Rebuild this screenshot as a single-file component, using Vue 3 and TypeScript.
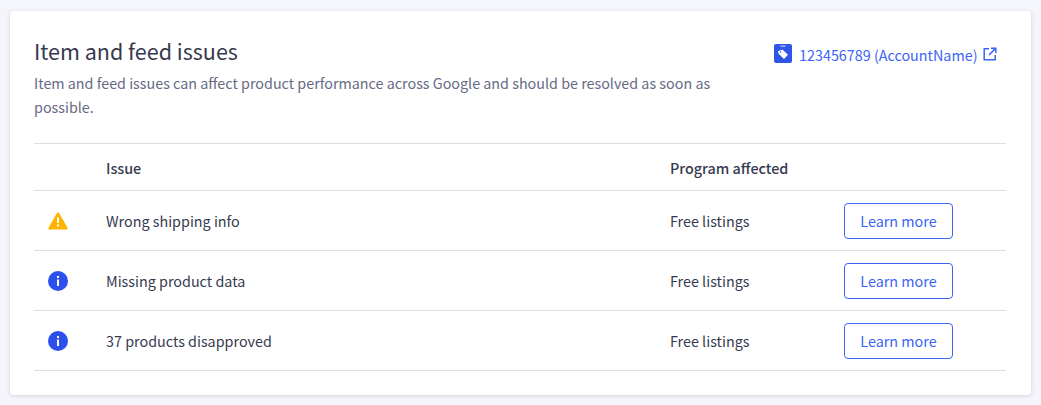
<script setup lang="ts">
interface Issue {
  kind: 'warning' | 'info'
  name: string
  program: string
}
const issues: Issue[] = [
  { kind: 'warning', name: 'Wrong shipping info', program: 'Free listings' },
  { kind: 'info', name: 'Missing product data', program: 'Free listings' },
  { kind: 'info', name: '37 products disapproved', program: 'Free listings' },
]
</script>

<template>
  <div class="page">
    <section class="card">
      <header class="head">
        <div class="intro">
          <h2 class="title">Item and feed issues</h2>
          <p class="desc">Item and feed issues can affect product performance across Google and should be resolved as soon as possible.</p>
        </div>
        <a class="account">
          <svg class="tag" width="18" height="19" viewBox="0 0 18 19">
            <rect width="18" height="19" rx="2" fill="#3056e8" />
            <rect x="6.5" y="1.500" width="5" height="1.200" fill="#c9d3fb" />
            <path d="M4 7.300 8.400 5.500 14 10.800 10 15 4.600 9.700Z" fill="#fff" />
            <circle cx="6.500" cy="8" r=".8" fill="#3056e8" />
          </svg>
          <span>123456789 (AccountName)</span>
          <svg class="ext" width="14" height="14" viewBox="0 0 14 14" fill="none" stroke="#3c64f4" stroke-width="1.500">
            <path d="M6 1.800H1.200V12.800H12.200V8" />
            <path d="M8 1.200H12.800V6" />
            <path d="M12.600 1.400 6 8" />
          </svg>
        </a>
      </header>
      <div class="row headrow">
        <div></div>
        <div>Issue</div>
        <div>Program affected</div>
        <div></div>
      </div>
      <div v-for="issue in issues" :key="issue.name" class="row">
        <div class="iconcell">
          <svg v-if="issue.kind === 'warning'" width="20" height="18" viewBox="0 0 20 18">
            <path d="M10 .6c.5 0 1 .3 1.200.7l8.300 14.500c.5.900-.1 1.800-1.100 1.800H1.600c-1 0-1.600-.9-1.100-1.800L8.800 1.300C9 .9 9.500.6 10 .6Z" fill="#ffb400" />
            <rect x="9" y="5.500" width="2" height="5.500" fill="#fff" />
            <rect x="9" y="12.500" width="2" height="2" fill="#fff" />
          </svg>
          <svg v-else width="20" height="20" viewBox="0 0 20 20">
            <circle cx="10" cy="10" r="10" fill="#2b50ed" />
            <rect x="9" y="5" width="2" height="2" fill="#fff" />
            <rect x="9" y="8.500" width="2" height="6.500" fill="#fff" />
          </svg>
        </div>
        <div>{{ issue.name }}</div>
        <div>{{ issue.program }}</div>
        <div><button class="btn" type="button">Learn more</button></div>
      </div>
    </section>
  </div>
</template>

<style>
html, body { margin: 0; background: #f5f6fb; }
</style>

<style scoped>
.page {
  width: 1041px;
  height: 405px;
  padding: 11px 10px 10px;
  box-sizing: border-box;
  font-family: "Noto Sans CJK SC", "Noto Sans", sans-serif;
  color: #363a4f;
}
.card {
  height: 100%;
  box-sizing: border-box;
  background: #fff;
  border-radius: 4px;
  box-shadow: 0 1px 4px rgba(60, 65, 110, .2);
  padding: 24px 25px 0 24px;
}
.head {
  display: flex;
  justify-content: space-between;
  height: 108px;
}
.intro { width: 700px; }
.title {
  margin: 0;
  font-size: 21.5px;
  line-height: 32px;
  font-weight: 400;
  color: #363a4f;
}
.desc {
  margin: 4px 0 0;
  font-size: 14.33px;
  line-height: 24px;
  color: #666a84;
}
.account {
  display: flex;
  align-items: center;
  height: 20px;
  margin: 9px 9px 0 0;
  font-size: 14.35px;
  color: #3c64f4;
}
.tag { margin: -2px 7px 0 0; }
.ext { margin-left: 5.5px; }
.row {
  display: grid;
  grid-template-columns: 72px 564px 174px 1fr;
  align-items: center;
  height: 59px;
  border-bottom: 1px solid #dcdde6;
  font-size: 14.35px;
}
.headrow {
  height: 46px;
  border-top: 1px solid #dcdde6;
  font-weight: 500;
}
.iconcell {
  display: flex;
  padding-left: 14px;
}
.btn {
  width: 109px;
  height: 36px;
  padding: 0;
  background: #fff;
  border: 1px solid #3c64f4;
  border-radius: 4px;
  color: #3c64f4;
  font: inherit;
}
</style>
